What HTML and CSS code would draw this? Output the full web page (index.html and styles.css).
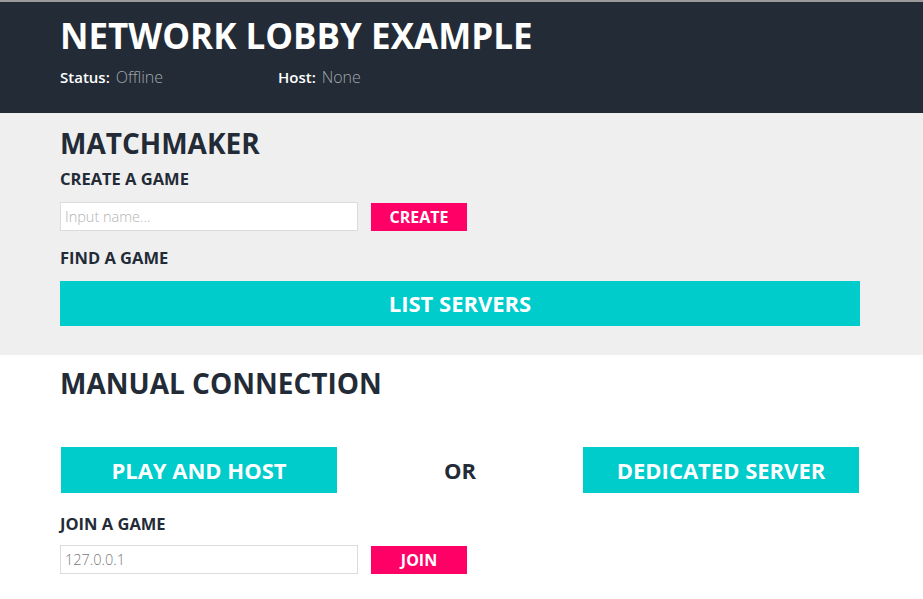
FILE: index.html
```html
<!DOCTYPE html>
<html>
<head>
<meta charset="utf-8">
<link rel="stylesheet" href="styles.css">
</head>
<body>
<div class="topstrip"></div>
<header class="header">
  <h1 class="title">NETWORK LOBBY EXAMPLE</h1>
  <div class="status-row">
    <div class="status"><span class="label">Status:</span> <span class="value">Offline</span></div>
    <div class="status"><span class="label">Host:</span> <span class="value">None</span></div>
  </div>
</header>
<section class="matchmaker">
  <h2 class="section-title">MATCHMAKER</h2>
  <h3 class="sub-title">CREATE A GAME</h3>
  <div class="input-row">
    <div class="field placeholder">Input name...</div>
    <div class="btn-pink">CREATE</div>
  </div>
  <h3 class="sub-title find">FIND A GAME</h3>
  <div class="btn-teal wide">LIST SERVERS</div>
</section>
<section class="manual">
  <h2 class="section-title manual-title">MANUAL CONNECTION</h2>
  <div class="host-row">
    <div class="btn-teal half">PLAY AND HOST</div>
    <div class="or">OR</div>
    <div class="btn-teal half">DEDICATED SERVER</div>
  </div>
  <h3 class="sub-title">JOIN A GAME</h3>
  <div class="input-row join-row">
    <div class="field value-text">127.0.0.1</div>
    <div class="btn-pink">JOIN</div>
  </div>
</section>
</body>
</html>
```
FILE: styles.css
```css
* { box-sizing: border-box; margin: 0; padding: 0; }
body {
  margin: 0;
  font-family: "Open Sans", "Liberation Sans", sans-serif;
  background: #ffffff;
  color: #222b36;
  width: 923px;
  height: 599px;
  overflow: hidden;
}
.topstrip { height: 2px; background: #9a9a9a; }
.header {
  background: #222b36;
  height: 111px;
  padding: 12px 60px 0 60px;
}
.title {
  color: #ffffff;
  font-size: 35px;
  font-weight: 700;
  line-height: 44px;
}
.status-row { display: flex; margin-top: 9px; }
.status { width: 218px; font-size: 15px; line-height: 20px; }
.label { color: #ffffff; font-weight: 600; }
.value { color: #a3a7ad; font-weight: 300; font-size: 16px; margin-left: 2px; }
.matchmaker {
  background: #efefef;
  height: 242px;
  padding: 10px 60px 0 60px;
}
.section-title {
  font-size: 28px;
  font-weight: 700;
  line-height: 40px;
  color: #222b36;
}
.manual-title { margin-left: -1px; }
.sub-title {
  font-size: 16.5px;
  font-weight: 700;
  line-height: 22px;
  color: #222b36;
  margin-top: 5px;
}
.input-row { display: flex; align-items: center; gap: 13px; margin-top: 12px; }
.field {
  width: 298px;
  height: 29px;
  background: #ffffff;
  border: 1px solid #dcdcdc;
  font-size: 14.5px;
  line-height: 27px;
  padding-left: 4px;
  font-weight: 300;
}
.placeholder { color: #b4b4b4; }
.value-text { color: #777777; }
.btn-pink {
  width: 96px;
  height: 28px;
  background: #ff0066;
  color: #ffffff;
  font-size: 16px;
  font-weight: 700;
  line-height: 28px;
  text-align: center;
}
.find { margin-top: 16px; }
.btn-teal {
  background: #00cccc;
  color: #ffffff;
  font-size: 22px;
  font-weight: 700;
  text-align: center;
}
.wide { width: 800px; height: 45px; line-height: 45px; margin-top: 12px; }
.manual { padding: 8px 64px 0 61px; }
.host-row { display: flex; align-items: center; justify-content: space-between; margin-top: 44px; }
.half { width: 276px; height: 46px; line-height: 46px; }
.or { font-size: 22px; font-weight: 700; }
.manual .sub-title { margin-top: 20px; margin-left: -1px; }
.join-row { margin-top: 10px; margin-left: -1px; }
```
